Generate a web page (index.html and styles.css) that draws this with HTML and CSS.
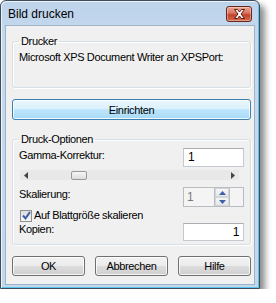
FILE: index.html
```html
<!DOCTYPE html>
<html lang="de">
<head>
    <meta charset="UTF-8">
    <title>Bild drucken</title>
    <link rel="stylesheet" href="styles.css">
</head>
<body>
    <div class="window">
        <div class="titlebar">
            <span class="title">Bild drucken</span>
            <span class="close-btn">
                <svg width="13" height="10" viewBox="0 0 13 10">
                    <path d="M1.5 0.5h3l2 2.5 2-2.5h3l-3.5 4.5 3.5 4.5h-3l-2-2.5-2 2.5h-3l3.5-4.5z" fill="#fff" stroke="#5a1b12" stroke-width="1"/>
                </svg>
            </span>
        </div>
        <div class="client">
            <fieldset class="group">
                <legend>Drucker</legend>
                <div class="printer-name">Microsoft XPS Document Writer an XPSPort:</div>
            </fieldset>

            <div class="btn btn-default">Einrichten</div>

            <fieldset class="group options">
                <legend>Druck-Optionen</legend>
                <div class="row">
                    <span class="label">Gamma-Korrektur:</span>
                    <div class="field">1</div>
                </div>
                <div class="scrollbar">
                    <svg class="arrow" width="4" height="7" viewBox="0 0 4 7"><path d="M4 0v7L0 3.5z" fill="#444"/></svg>
                    <span class="thumb"></span>
                    <span class="track-rest"></span>
                    <svg class="arrow" width="4" height="7" viewBox="0 0 4 7"><path d="M0 0v7L4 3.5z" fill="#444"/></svg>
                </div>
                <div class="row row-scale">
                    <span class="label">Skalierung:</span>
                    <div class="spin">
                        <span class="spin-value">1</span>
                        <span class="spin-buttons">
                            <span class="spin-btn"><svg width="7" height="4" viewBox="0 0 7 4"><path d="M0 4h7L3.5 0z" fill="#3a62a8"/></svg></span>
                            <span class="spin-btn"><svg width="7" height="4" viewBox="0 0 7 4"><path d="M0 0h7L3.5 4z" fill="#3a62a8"/></svg></span>
                        </span>
                    </div>
                </div>
                <div class="check">
                    <span class="checkbox">
                        <svg width="9" height="9" viewBox="0 0 9 9"><path d="M1 4.5l2.5 2.8L8 1" fill="none" stroke="#3a5ba6" stroke-width="2"/></svg>
                    </span>
                    <span>Auf Blattgröße skalieren</span>
                </div>
                <div class="row row-copies">
                    <span class="label">Kopien:</span>
                    <div class="field field-right">1</div>
                </div>
            </fieldset>

            <div class="buttons">
                <div class="btn">OK</div>
                <div class="btn">Abbrechen</div>
                <div class="btn">Hilfe</div>
            </div>
        </div>
    </div>
</body>
</html>
```

FILE: styles.css
```css
body {
    margin: 0;
    background-color: #ffffff;
    font-family: "Liberation Sans", Arial, sans-serif;
    font-size: 11px;
    letter-spacing: -0.35px;
    color: #000000;
}

.window {
    box-sizing: border-box;
    width: 260px;
    border: 1px solid #3f4c5c;
    border-radius: 6px 6px 0 0;
    background: linear-gradient(#bcd3ea, #c6daee 40px, #c3d8ed);
    padding: 0 4px 3px;
    box-shadow: 5px 5px 6px rgba(0, 0, 0, 0.45),
                inset 1px 1px 0 rgba(255, 255, 255, 0.7),
                inset -1px -1px 0 #58c6ea;
}

.titlebar {
    height: 24px;
    display: flex;
    align-items: center;
    justify-content: space-between;
    padding: 0 3px 0 3px;
}

.title {
    font-size: 12px;
    letter-spacing: 0;
    margin-top: 1px;
}

.close-btn {
    box-sizing: border-box;
    width: 26px;
    height: 16px;
    margin-top: 2px;
    border: 1px solid #6b2418;
    border-radius: 3px;
    background: linear-gradient(#e9a796, #d9725c 45%, #c2422c 55%, #d46a4a);
    display: flex;
    align-items: center;
    justify-content: center;
    box-shadow: inset 0 0 0 1px rgba(255, 255, 255, 0.35);
}

.client {
    border: 1px solid #9fb3c8;
    background-color: #f0f0f0;
    padding: 8px 3px 8px 6px;
}

.group {
    margin: 0;
    padding: 2px 6px 23px;
    border: 1px solid #d5dfe5;
    border-radius: 3px;
    box-shadow: inset 1px 1px 0 #ffffff, 1px 1px 0 #ffffff;
}

.group legend {
    padding: 0 2px;
    line-height: 14px;
}

.printer-name {
    line-height: 14px;
    white-space: nowrap;
}

.btn {
    box-sizing: border-box;
    height: 21px;
    border: 1px solid #707070;
    border-radius: 3px;
    background: linear-gradient(#f2f2f2, #ebebeb 50%, #dddddd 50%, #cfcfcf);
    box-shadow: inset 0 0 0 1px rgba(255, 255, 255, 0.8);
    display: flex;
    align-items: center;
    justify-content: center;
}

.btn-default {
    margin: 11px 0 12px;
    border-color: #3c7fb1;
    background: linear-gradient(#eaf6fd, #d9f0fc 50%, #bee6fd 50%, #a7d9f5);
}

.options {
    padding-bottom: 3px;
}

.row {
    display: flex;
    justify-content: space-between;
    align-items: flex-start;
}

.label {
    line-height: 14px;
}

.field {
    box-sizing: border-box;
    width: 61px;
    height: 19px;
    border: 1px solid #c5cad0;
    border-top-color: #abadb3;
    background-color: #ffffff;
    padding: 0 4px;
    line-height: 17px;
    font-size: 12px;
}

.field-right {
    text-align: right;
}

.scrollbar {
    box-sizing: border-box;
    margin: 3px 5px 0 1px;
    height: 10px;
    background-color: #e8e8e8;
    display: flex;
    align-items: center;
    padding: 0 4px;
}

.thumb {
    box-sizing: border-box;
    width: 16px;
    height: 9px;
    margin-left: 43px;
    border: 1px solid #999999;
    border-radius: 2px;
    background: linear-gradient(#f6f6f6, #dcdcdc);
}

.track-rest {
    flex: 1;
}

.row-scale {
    margin-top: 7px;
}

.spin {
    box-sizing: border-box;
    width: 61px;
    height: 20px;
    border: 1px solid #b9bdc1;
    background-color: #f4f4f4;
    display: flex;
    align-items: center;
}

.spin-value {
    width: 27px;
    padding-left: 3px;
    color: #7a7a7a;
    font-size: 12px;
}

.spin-buttons {
    box-sizing: border-box;
    width: 16px;
    height: 18px;
    border-left: 1px solid #b9bdc1;
    border-right: 1px solid #b9bdc1;
    display: flex;
    flex-direction: column;
}

.spin-btn {
    flex: 1;
    display: flex;
    align-items: center;
    justify-content: center;
    border: 1px solid #d2d6da;
    background: linear-gradient(#f6f6f6, #e6e6e6);
}

.check {
    display: flex;
    align-items: center;
    gap: 2px;
    margin-top: 2px;
    line-height: 13px;
}

.checkbox {
    box-sizing: border-box;
    width: 12px;
    height: 12px;
    margin-left: 1px;
    border: 1px solid #8e8f8f;
    background: linear-gradient(#dcdcdc, #f6f6f6);
    display: flex;
    align-items: center;
    justify-content: center;
}

.row-copies {
    margin-top: 0;
}

.row-copies .field {
    height: 18px;
    line-height: 16px;
    margin-top: 1px;
}

.buttons {
    margin-top: 11px;
    display: grid;
    grid-template-columns: repeat(3, 1fr);
    gap: 10px;
}

.buttons .btn {
    height: 20px;
}
```
